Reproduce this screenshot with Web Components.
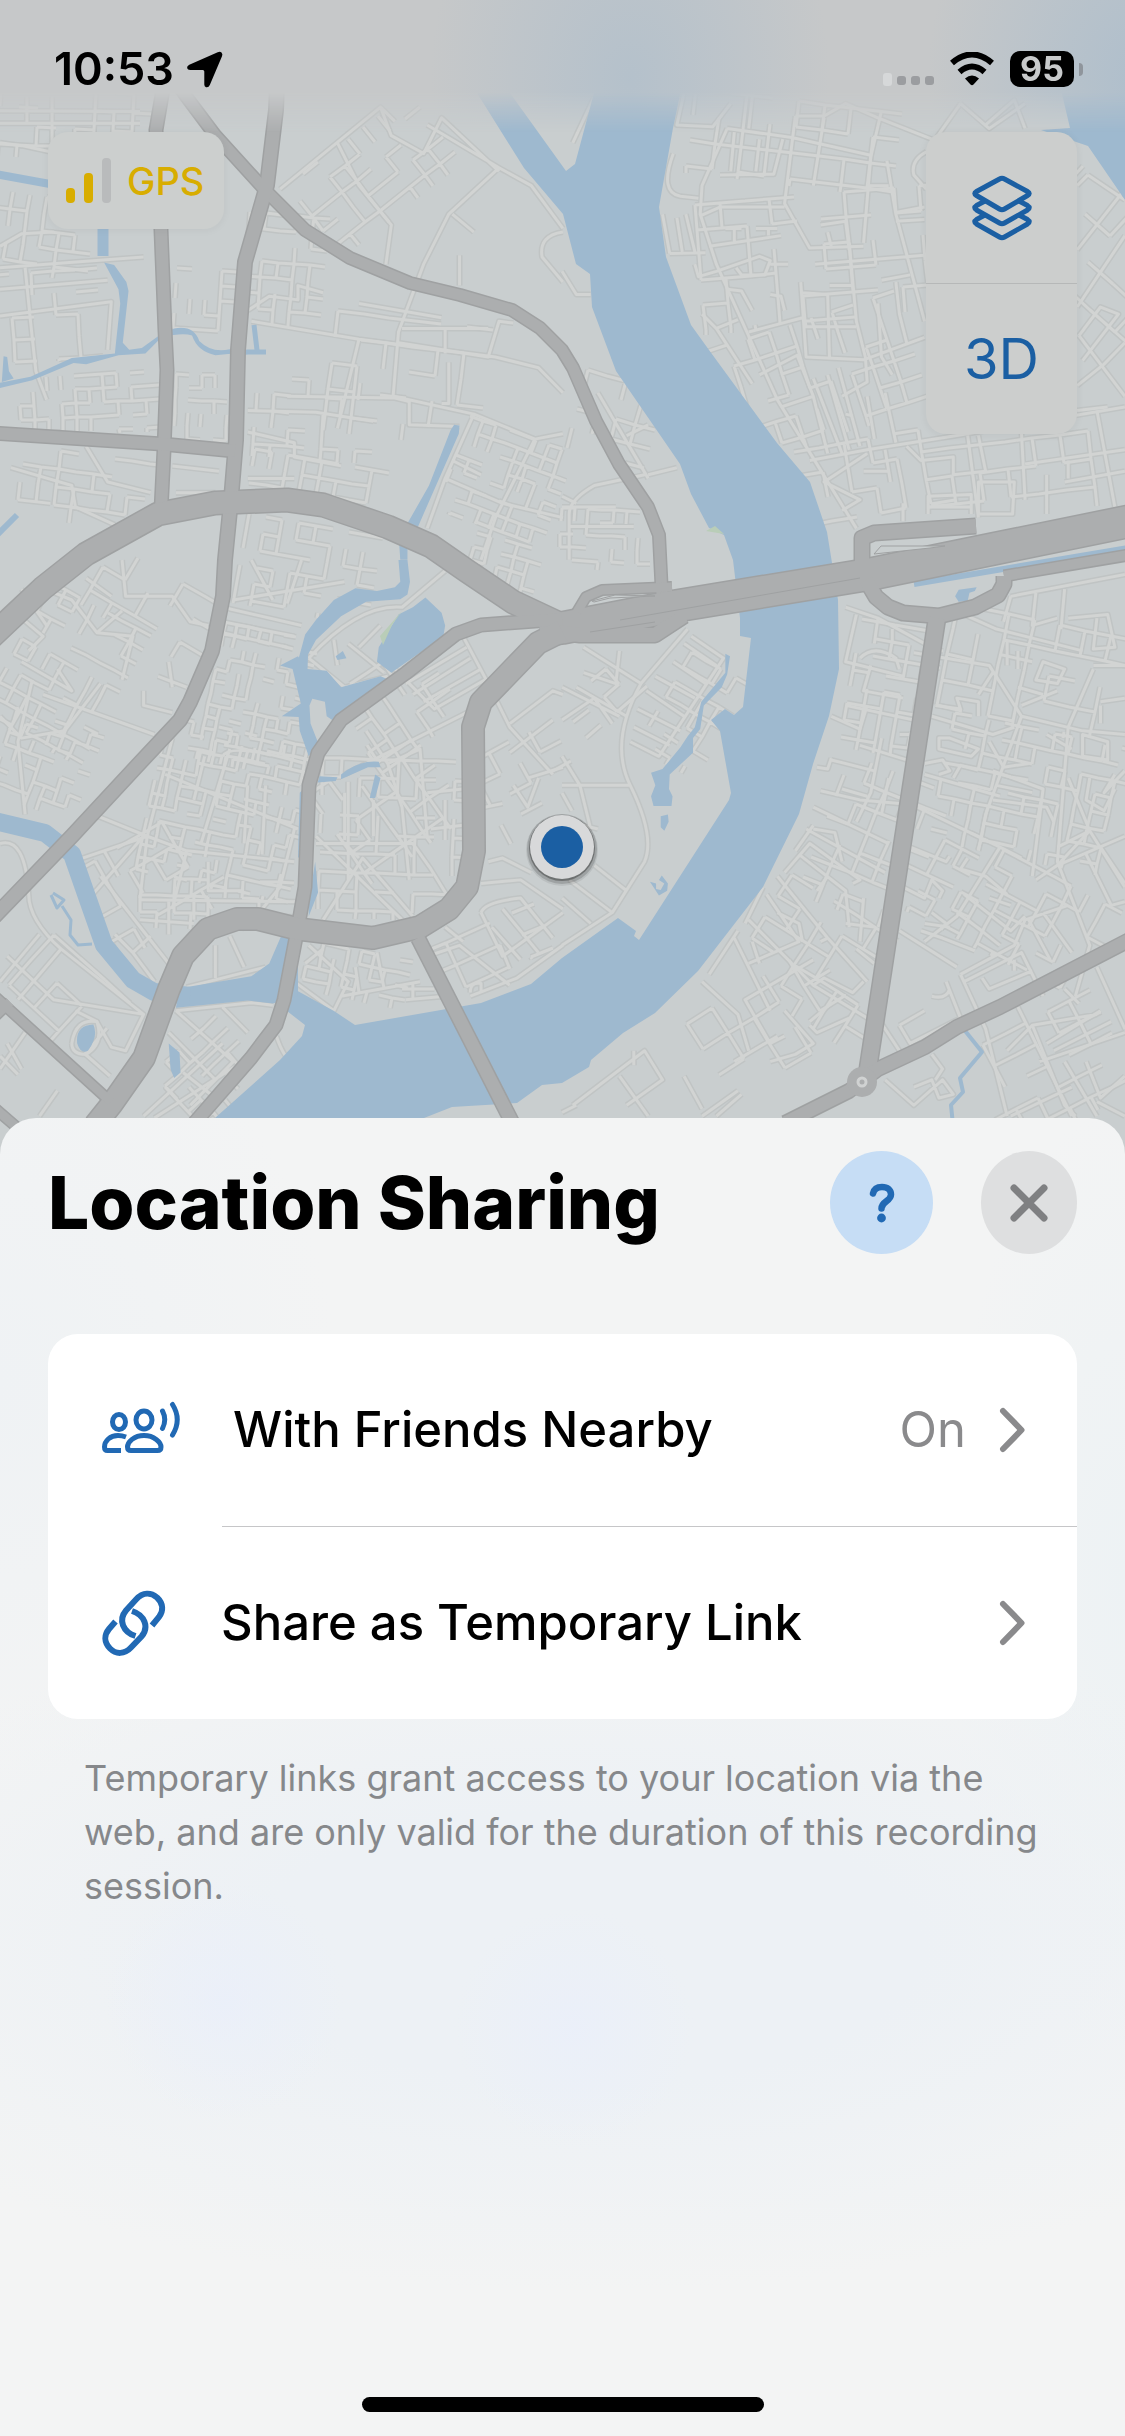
<!DOCTYPE html>
<html lang="en">
<head>
<meta charset="utf-8">
<meta name="viewport" content="width=device-width, initial-scale=1">
<title>Location Sharing</title>
<style>
	body {
		margin: 0;
		font-family: Inter, "Liberation Sans", sans-serif;
		color: #000000;
		background: #c9cecf;
	}
</style>
</head>
<body>
<share-screen>
	<city-map slot="map"></city-map>
	<status-bar slot="status" time="10:53" battery="95"></status-bar>
	<gps-badge slot="tools">GPS</gps-badge>
	<map-controls slot="tools"></map-controls>
	<share-sheet slot="sheet">
		<span slot="title">Location Sharing</span>
		<share-row icon="friends" value="On">With Friends Nearby</share-row>
		<share-row icon="link">Share as Temporary Link</share-row>
		<span slot="note">Temporary links grant access to your location via the web, and are only valid for the duration of this recording session.</span>
	</share-sheet>
</share-screen>

<script>
class ShareScreen extends HTMLElement {
	constructor() {
		super();
		let shadowRoot = this.attachShadow({mode: 'open'});
		shadowRoot.innerHTML = `
		<style>
		:host {
			display: grid;
			grid-template-rows: 559fr 659fr;
			grid-template-columns: minmax(0, 1fr);
			min-height: 100vh;
			overflow: hidden;
		}
		.map {
			grid-area: 1 / 1 / 3 / 2;
			min-height: 0;
		}
		.top {
			grid-area: 1 / 1 / 2 / 2;
			position: relative;
		}
		.tools {
			display: flex;
			justify-content: space-between;
			align-items: flex-start;
			padding: 0 48px;
		}
		.sheet {
			grid-area: 2 / 1 / 3 / 2;
			position: relative;
			display: grid;
		}
		</style>
		<div class="map"><slot name="map"></slot></div>
		<div class="top">
			<slot name="status"></slot>
			<div class="tools"><slot name="tools"></slot></div>
		</div>
		<div class="sheet"><slot name="sheet"></slot></div>`;
	}
}
window.customElements.define('share-screen', ShareScreen);

class StatusBar extends HTMLElement {
	constructor() {
		super();
		let shadowRoot = this.attachShadow({mode: 'open'});
		shadowRoot.innerHTML = `
		<style>
		:host {
			box-sizing: border-box;
			display: flex;
			justify-content: space-between;
			align-items: flex-start;
			height: 132px;
			padding: 42px 42px 0 54px;
			background:
				radial-gradient(ellipse 200px 260px at 56% 60%, rgba(166, 187, 205, .55), transparent),
				radial-gradient(ellipse 220px 260px at 102% 60%, rgba(166, 187, 205, .75), transparent),
				#c6c8c9;
			-webkit-mask-image: linear-gradient(#000 70%, transparent);
			mask-image: linear-gradient(#000 70%, transparent);
		}
		.left, .right {
			display: flex;
			align-items: center;
			height: 54px;
		}
		.left {
			gap: 12px;
			font-size: 45px;
			line-height: 54px;
			font-weight: 600;
		}
		svg {
			display: block;
		}
		.dots {
			margin-right: 14px;
		}
		.wifi {
			margin-right: 15px;
		}
		.battery {
			box-sizing: border-box;
			width: 64px;
			height: 36px;
			border-radius: 10px;
			background: #000000;
			color: #c8cacb;
			font-size: 34px;
			line-height: 36px;
			font-weight: 700;
			text-align: center;
		}
		.nub {
			width: 4px;
			height: 13px;
			margin-left: 5px;
			border-radius: 0 5px 5px 0;
			background: #8f959c;
		}
		</style>
		<div class="left">
			<span class="time"></span>
			<svg width="37" height="37" viewBox="0 0 37 37"><path d="M35.500 1.500Q37 3 36 5.200L23.800 34Q22.500 37 20 36.200Q18.300 35.700 18.300 33.400V20.500Q18.300 19 16.800 19H4.200Q1.500 19 1.100 17Q.8 15 3.300 13.700L31.700 1.300Q34 .3 35.500 1.500Z"/></svg>
		</div>
		<div class="right">
			<svg class="dots" width="52" height="36" viewBox="0 0 52 36">
				<rect y="22" width="9" height="13" rx="3" fill="#d6d8d9"/>
				<g fill="#9b9da0"><rect x="14" y="25" width="9" height="9" rx="3"/><rect x="28" y="25" width="9" height="9" rx="3"/><rect x="42" y="25" width="9" height="9" rx="3"/></g>
			</svg>
			<svg class="wifi" width="46" height="34" viewBox="0 0 46 34">
				<path d="M3 11Q23-6 43 11" fill="none" stroke="#000" stroke-width="6"/>
				<path d="M10.500 20Q23 9 35.500 20" fill="none" stroke="#000" stroke-width="6"/>
				<path d="M16 26.500Q23 20.500 30 26.500L24.500 32.500Q23 34 21.500 32.500Z"/>
			</svg>
			<span class="battery"></span>
			<span class="nub"></span>
		</div>`;
	}

	connectedCallback() {
		this.shadowRoot.querySelector('.time').textContent = this.getAttribute('time');
		this.shadowRoot.querySelector('.battery').textContent = this.getAttribute('battery');
	}
}
window.customElements.define('status-bar', StatusBar);

class GpsBadge extends HTMLElement {
	constructor() {
		super();
		let shadowRoot = this.attachShadow({mode: 'open'});
		shadowRoot.innerHTML = `
		<style>
		:host {
			box-sizing: border-box;
			display: flex;
			align-items: center;
			gap: 16px;
			height: 97px;
			padding: 0 20px 0 18px;
			border-radius: 20px;
			background: #cccfce;
			box-shadow: 0 1px 8px rgba(0, 0, 0, .05);
			color: #d8ad00;
			font-size: 38px;
			line-height: 48px;
			font-weight: 500;
		}
		svg {
			display: block;
		}
		</style>
		<svg width="45" height="45" viewBox="0 0 45 45">
			<rect y="30" width="9" height="15" rx="4" fill="#d8ad00"/>
			<rect x="18" y="15" width="9" height="30" rx="4" fill="#d8ad00"/>
			<rect x="36" width="9" height="45" rx="4" fill="#b9bbbc"/>
		</svg>
		<span><slot></slot></span>`;
	}
}
window.customElements.define('gps-badge', GpsBadge);

class MapControls extends HTMLElement {
	constructor() {
		super();
		let shadowRoot = this.attachShadow({mode: 'open'});
		shadowRoot.innerHTML = `
		<style>
		:host {
			display: flex;
			flex-direction: column;
			width: 151px;
			border-radius: 20px;
			background: #cccecd;
			box-shadow: 0 1px 8px rgba(0, 0, 0, .06);
		}
		button {
			display: flex;
			justify-content: center;
			align-items: center;
			height: 151px;
			padding: 0;
			border: 0;
			background: none;
			color: #1b5fa3;
			font: inherit;
			font-size: 56px;
			line-height: 64px;
		}
		button + button {
			border-top: 1px solid #b6b8b8;
		}
		</style>
		<button type="button" aria-label="Map layers">
			<svg width="60" height="66" viewBox="0 0 60 66" fill="none" stroke="#1b5fa3" stroke-width="5" stroke-linejoin="round">
				<path d="M27.500 4Q30 2.500 32.500 4L55.500 16.500Q59 18.500 55.500 20.500L32.500 34Q30 35.500 27.500 34L4.500 20.500Q1 18.500 4.500 16.500Z"/>
				<path d="M13 26L4.500 30.500Q1 32.700 4.500 35L27.500 48Q30 49.500 32.500 48L55.500 35Q59 32.700 55.500 30.500L47 26"/>
				<path d="M13 40L4.500 44.500Q1 46.700 4.500 49L27.500 62Q30 63.500 32.500 62L55.500 49Q59 46.700 55.500 44.500L47 40"/>
			</svg>
		</button>
		<button type="button">3D</button>`;
	}
}
window.customElements.define('map-controls', MapControls);

class ShareSheet extends HTMLElement {
	constructor() {
		super();
		let shadowRoot = this.attachShadow({mode: 'open'});
		shadowRoot.innerHTML = `
		<style>
		:host {
			display: flex;
			flex-direction: column;
			padding: 33px 48px 24px;
			border-radius: 36px 36px 0 0;
			background:
				radial-gradient(circle at 20% 67%, rgba(234, 239, 250, .8), transparent 120px),
				radial-gradient(circle at 51% 69%, rgba(234, 239, 250, .8), transparent 120px),
				radial-gradient(ellipse 75% 26% at 52% 63%, #edf1f5 40%, transparent),
				radial-gradient(ellipse 30% 30% at 0% 20%, #eff2f4, transparent),
				radial-gradient(ellipse 16% 36% at 100% 35%, #edf2f4, transparent),
				#f3f4f4;
		}
		header {
			display: flex;
			align-items: center;
			gap: 48px;
		}
		h1 {
			flex: 1;
			margin: 0;
			font-size: 73px;
			line-height: 88px;
			font-weight: 800;
		}
		button {
			display: flex;
			justify-content: center;
			align-items: center;
			width: 96px;
			height: 103px;
			padding: 0;
			border: 0;
			border-radius: 50%;
			background: #dedfe0;
		}
		.help {
			width: 103px;
			background: #c6ddf5;
		}
		.card {
			margin-top: 80px;
			border-radius: 30px;
			background: #ffffff;
			overflow: hidden;
		}
		p {
			flex: 1;
			margin: 32px 36px 0;
			color: #86888b;
			font-size: 36px;
			line-height: 54px;
		}
		.home {
			align-self: center;
			width: 402px;
			height: 15px;
			border-radius: 8px;
			background: #000000;
		}
		</style>
		<header>
			<h1><slot name="title"></slot></h1>
			<button class="help" type="button" aria-label="Help">
				<svg width="26" height="40" viewBox="0 0 26 40"><path d="M4 10.500C5 6 8.500 4 13 4C18.500 4 22 7 22 11.500C22 18.500 12.500 18 12.500 25.500" fill="none" stroke="#2169b4" stroke-width="6.500" stroke-linecap="round"/><circle cx="12.500" cy="35" r="4.400" fill="#2169b4"/></svg>
			</button>
			<button type="button" aria-label="Close">
				<svg width="38" height="38" viewBox="0 0 38 38"><path d="M4 4L34 34M34 4L4 34" stroke="#7f8082" stroke-width="7" stroke-linecap="round"/></svg>
			</button>
		</header>
		<div class="card"><slot></slot></div>
		<p><slot name="note"></slot></p>
		<div class="home"></div>`;
	}
}
window.customElements.define('share-sheet', ShareSheet);

const rowIcons = {
	friends: `
		<svg width="80" height="60" viewBox="0 0 80 60" fill="none" stroke="#2169b4" stroke-width="5" stroke-linecap="round">
			<ellipse cx="18" cy="22" rx="6.500" ry="7.500"/>
			<ellipse cx="43" cy="20" rx="8" ry="9"/>
			<path d="M25 37Q21 35.500 17 35.500C9 35.500 3.500 41 3.500 47Q3.500 50.500 6.500 50.500H20" stroke-linecap="butt"/>
			<path d="M43 35.500C33 35.500 26.500 42 26.500 47Q26.500 50.500 30 50.500H56.500Q60 50.500 60 47C60 42 53 35.500 43 35.500Z"/>
			<path d="M61.500 11Q66 19.500 61.500 28.500M71.500 4.500Q81 19.500 71.500 35"/>
		</svg>`,
	link: `
		<svg width="66" height="66" viewBox="0 0 66 66" fill="none" stroke="#2169b4" stroke-width="6">
			<path d="M34.500 46C22 42 17 30 25 20.500L35 9.500C42 2 50 2.500 56 7.500C62.500 13.500 62.500 21 58 27L51 35.500"/>
			<path d="M31 21C43.500 25 48.500 37 40.500 46.500L30 57.500C23.500 64.500 15 64.500 9 58.500C3 52.500 3 45 8 39L14.500 31.500"/>
		</svg>`
};

class ShareRow extends HTMLElement {
	constructor() {
		super();
		let shadowRoot = this.attachShadow({mode: 'open'});
		shadowRoot.innerHTML = `
		<style>
		:host {
			display: block;
			--inset: 174px;
		}
		button {
			box-sizing: border-box;
			display: flex;
			align-items: center;
			width: 100%;
			height: 192px;
			padding: 0 51px 0 53px;
			border: 0;
			background: none;
			color: #000000;
			font: inherit;
			font-size: 49px;
			line-height: 60px;
			font-weight: 500;
			text-align: left;
		}
		.icon {
			flex: none;
			min-width: 120px;
		}
		.icon svg, .chevron {
			display: block;
		}
		:host([icon="friends"]) .icon {
			min-width: 132px;
		}
		.label {
			flex: 1;
		}
		.value {
			margin-right: 32px;
			color: #8a8a8c;
			font-weight: 400;
		}
		:host(:not(:first-of-type)) .line {
			height: 1px;
			margin-left: var(--inset);
			background: #c6c6c8;
		}
		</style>
		<div class="line"></div>
		<button type="button">
			<span class="icon"></span>
			<span class="label"><slot></slot></span>
			<span class="value"></span>
			<svg class="chevron" width="28" height="48" viewBox="0 0 28 48"><path d="M5 5L23.500 24L5 43" fill="none" stroke="#8a8a8c" stroke-width="6" stroke-linecap="round" stroke-linejoin="round"/></svg>
		</button>`;
	}

	connectedCallback() {
		this.shadowRoot.querySelector('.icon').innerHTML = rowIcons[this.getAttribute('icon')];
		this.shadowRoot.querySelector('.value').textContent = this.getAttribute('value') || '';
	}
}
window.customElements.define('share-row', ShareRow);

// dense blocks of side streets: x, y, width, height, angle, spacing
const blocks = [
	[-20, 90, 170, 70, 3, 19], [-10, 196, 95, 80, 8, 17], [-10, 272, 110, 90, -4, 22], [20, 375, 130, 60, -3, 14],
	[175, 270, 60, 60, 4, 15], [175, 375, 55, 65, 2, 13], [245, 215, 75, 110, 5, 16], [300, 130, 150, 90, -38, 19],
	[255, 380, 110, 80, 4, 17], [330, 320, 150, 120, 7, 26], [450, 430, 100, 100, 20, 14], [250, 460, 130, 45, 10, 17],
	[20, 455, 130, 70, 8, 18], [240, 525, 130, 90, 10, 17], [90, 570, 120, 70, 30, 26], [10, 600, 110, 150, 28, 16],
	[210, 630, 90, 140, 12, 12], [150, 730, 145, 160, 12, 13], [0, 720, 90, 90, 20, 13], [90, 840, 110, 100, -30, 26],
	[320, 760, 145, 160, 2, 19], [330, 750, 120, 110, -35, 24], [350, 660, 100, 90, -34, 20], [485, 740, 80, 90, -28, 23],
	[140, 880, 140, 50, 2, 17], [305, 950, 95, 50, 12, 13], [430, 930, 100, 50, -24, 24], [10, 960, 110, 90, 42, 34],
	[170, 1040, 70, 75, -43, 17], [580, 340, 80, 130, 15, 20], [560, 510, 90, 60, 3, 13], [470, 540, 60, 50, 15, 14],
	[690, 100, 190, 85, 7, 26], [700, 195, 230, 130, -5, 25], [720, 320, 190, 120, -18, 22], [800, 440, 130, 75, -10, 25],
	[925, 440, 190, 75, -7, 28], [1085, 170, 90, 230, -48, 34], [850, 625, 75, 130, 10, 17], [820, 770, 110, 150, 22, 22],
	[945, 620, 170, 110, 12, 26], [940, 730, 180, 130, 12, 17], [920, 860, 180, 100, 28, 19], [750, 900, 130, 120, 32, 25],
	[980, 1020, 130, 110, -27, 24], [700, 980, 140, 90, -32, 30], [565, 680, 70, 40, -40, 20], [660, 660, 60, 110, 30, 17]
];

class CityMap extends HTMLElement {
	constructor() {
		super();
		let shadowRoot = this.attachShadow({mode: 'open'});
		shadowRoot.innerHTML = `
		<style>
		:host {
			display: block;
			height: 100%;
		}
		svg {
			display: block;
			width: 100%;
			height: 100%;
		}
		path {
			vector-effect: non-scaling-stroke;
		}
		.water {
			fill: #9eb9cf;
		}
		.canal {
			fill: none;
			stroke: #9eb9cf;
			stroke-linejoin: round;
		}
		.edge {
			stroke: #c0c4c4;
			stroke-width: 6px;
		}
		.street {
			stroke: #d2d4d3;
			stroke-width: 3px;
		}
		.road {
			fill: none;
			stroke: #acaeaf;
			stroke-linejoin: round;
		}
		.casing {
			fill: none;
			stroke: #9fa1a2;
			stroke-linejoin: round;
		}
		</style>
		<svg viewBox="0 0 1125 2436" preserveAspectRatio="xMidYMin slice" role="img" aria-label="Map">
			<defs>
				<g id="streets" fill="none" stroke-linejoin="round">
					<path id="blocks"/>
					<g transform="scale(.359 .357)">
						<path d="M0 750L240 732L400 720M0 810L300 785M70 750L85 900L100 1040L130 1120M0 885L310 845L300 980M0 400L60 408L140 425M0 345L390 345M0 310L390 312M75 270V345M145 270V400M0 690L60 655L150 650"/>
						<path d="M780 530L1060 300L1100 340M940 400L1000 520L1090 630L1075 740M1190 350L1390 470L1250 600L1180 740L1110 930L1095 1110M1060 300L1090 380L1180 430L1230 330L1390 480M1390 470L1480 520L1568 640M1568 650Q1500 660 1510 720L1568 790M1260 600L1320 650M1280 715V800"/>
						<path d="M700 900L1000 950L1380 1000L1500 1030L1568 1100M690 870L750 830L830 840V800L900 820M1000 850L1230 890M1110 960L1360 1000L1390 900L1430 905M1120 920H1360M1000 950L940 1200M1240 920V990M690 1150L880 1155L1040 1180M800 1110L1100 1115L1140 1125V1190L1280 1195M1095 1110L1320 1160L1240 1340L1190 1480M1320 1160L1490 1230L1568 1215M1490 1230L1380 1450L1340 1568M1240 1340L1400 1410L1568 1450M1260 1290L1340 1330"/>
						<path d="M1250 1015V1130H1230M690 1210L820 1240V1280L950 1305M690 1340H820M480 1305L610 1320M490 1380H600M30 1310L200 1360L210 1420L320 1470M50 1400L140 1410M240 1250L300 1350L420 1380"/>
					</g>
					<g transform="translate(562 0) scale(.359 .357)">
						<path d="M90 270L30 400M340 260L320 350L420 355L470 290M460 360L640 385L860 435M460 360L390 520L385 600L430 740L600 1120L820 1480M650 325L620 570L690 695L840 690M650 325H730L790 290L880 330L1030 390M310 430Q270 540 330 550L380 555M440 490L590 488L615 390M385 605L440 580H620M890 310L860 440L840 680M730 330L700 520M1110 290L1190 360L1290 290M1110 290L1040 390M1180 350L1260 280L1290 360M520 360L530 270M480 370L470 480M550 390L540 480"/>
						<path d="M1015 425Q970 450 980 490L1015 530M905 450L930 600L1010 900M850 520H910M930 595L1010 580M930 620L1010 615M410 690L610 660M480 640V680M455 640H500M575 640V660M540 640H600M485 750L500 770H565L580 730L550 718L430 760L380 775L370 740M580 740H630M300 710L400 708M300 710L280 600M345 600L370 705M320 610L335 705M705 740L1010 715M800 680L820 900L845 1000L850 1070L780 1110M720 630L790 620L800 700M740 650L750 690"/>
						<path d="M665 790L680 1000L840 1008L1010 945M670 820L740 825L745 1000M670 915H820M745 800H810M430 920L490 895M390 880L430 920L530 1075M520 930L670 890M460 810L500 815L530 870M580 825L610 830L620 870M890 785L970 770M880 850L890 1000L920 1050M930 790L940 880L960 960M550 1050L655 995L700 1110L740 1270M610 1140L700 1110M740 1050L800 1260M770 1030L830 1250M850 1110L870 1230M900 1100L930 1240M700 1060L780 1270M690 1290L850 1260L1100 1220L1568 1140M790 1160L810 1165"/>
						<path d="M850 1270L730 1350L830 1400L780 1430M960 1250L1000 1290L1090 1280V1330L1180 1320L1160 1220M1280 1215L1290 1400M1290 1300L1568 1260M1490 1150L1540 1420M1160 1350H1260L1255 1440H1160ZM1020 1440V1390L1140 1385V1440M1020 1420H1140M840 1320H910M950 1410V1460M900 1260L915 1350M1130 1220L1160 1450M1400 1350L1568 1320M1410 1290V1340M1350 1330V1440"/>
						<path d="M1435 700L1568 530M1435 860L1568 660M1465 490L1568 560M1435 520L1465 490M1440 940L1500 860L1550 880L1450 1010M1440 940L1568 1110M1435 1080L1510 1020L1568 960M1435 1150L1520 1140M180 1220L240 1190M240 1330L320 1310M100 1100L240 1340M0 1390L40 1410M20 1568V1440Q20 1400 90 1360L230 1330M0 1420H150M20 1475H200M0 760L40 825H80"/>
					</g>
					<g transform="translate(0 560) scale(.359 .3635)">
						<path d="M150 90L200 110L270 200L370 210L340 330M270 200L340 140M160 300L200 360L60 280M0 180L60 160L120 210L80 250M60 80L130 180M340 0L350 100L480 100L530 170L580 180M240 50L310 100M620 130L840 180M620 170L820 210M620 200L800 240M700 0L760 110M840 0L800 120M650 110L960 60M0 430L60 490L180 470L280 340M90 330L50 500L70 700M120 370L430 480M400 360V400L480 420M440 320L520 350M470 280L480 350"/>
						<path d="M480 490L410 760L390 930M460 590L830 740M620 540Q640 500 850 560M640 520L560 780M410 760L520 800L820 830M520 800L480 960M580 830V910H680M390 935L830 940M470 940V1030M540 920V990M390 990L540 1000M820 740L780 900L730 960M570 540L540 660M690 620L680 780M740 620L730 810M230 820L410 760L260 700M240 940L400 760M280 870L470 1110M320 1030L370 1080L430 1160M370 1080L420 1035M290 800L330 870"/>
						<path d="M860 270L960 350L1080 320M860 270Q1000 120 1120 130L1240 30M930 220L940 290M970 230L1070 310M1000 240L1060 180M1080 280L1210 410L1350 330M1130 340L1300 240M1150 370L1310 270M1180 390L1340 300M1290 210L1360 340L1420 460L1540 590M960 590L1380 380M1020 470L1080 560L1170 520L1190 760M960 640L960 770M970 610V880M1080 560L1120 680L1140 880M880 780H1150L1200 850L1250 930M880 760L1120 990M900 990L1010 820L1150 980M1000 820L960 780M1040 660V760M1190 640L1290 630M1200 740L1290 730M1240 660V770"/>
						<path d="M1420 450L1540 360L1568 370M1420 530L1540 440M1470 600L1568 570M1430 620L1470 680L1500 600M1350 680L1400 670M1360 830L1400 820L1480 860M1340 890L1450 880L1568 960M1340 970Q1350 940 1450 930L1540 1040M1340 970L1400 1090L1568 970M1370 1010L1450 1100M1400 960L1500 1080M1190 1090L1280 1060L1420 1170M1240 1010L1290 1050M1310 1200L1440 1150L1568 1060M1310 1190Q1310 1160 1340 1165V1190M860 1060L970 1160L930 1240L820 1160M850 1110L900 1070M950 1200L1170 1160M990 1120L1000 1190M1050 1080L1070 1180M1120 1180H1210M1130 1210L1240 1200M1150 1160V1210"/>
						<path d="M0 780Q70 760 80 920Q80 990 170 1070L400 1250L350 1350L310 1340L270 1270L210 1240M20 1090L150 1210L400 1250M50 1210L170 1070M0 1160L110 1030M490 1240L700 1218L760 1225M490 1240L650 1380L530 1500M620 1230L690 1300M400 1530L620 1330M430 1535L660 1390M470 1300L600 1430M460 1450L540 1535M510 1410L600 1480M770 1310Q790 1370 820 1390M800 1405L885 1330M520 1175L740 1120M600 1060V1150M640 1035L680 1120"/>
						<path d="M200 1330Q210 1260 270 1270Q290 1330 240 1360Q200 1360 200 1330M0 1400L70 1300M20 1330L60 1400M0 1365L50 1415M110 1530L160 1460"/>
					</g>
					<g transform="translate(562 560) scale(.359 .3635)">
						<path d="M350 190L220 340Q130 500 190 620Q260 760 230 830L140 970L0 1060M360 210L450 270L270 540L190 500M340 230L430 290M310 280L400 340M260 320L370 380M235 360L340 430M210 410L330 470M200 460L300 510M0 620H190M0 540L50 620L80 740M100 740L60 730M90 840L180 910M20 880L140 970M0 930L80 1000M0 350L160 430M0 440L90 380L140 450M40 350L180 430M60 240L220 340M160 250L150 340L60 310"/>
						<path d="M790 130L880 160L1010 230M820 150L790 280L950 320M830 270Q870 230 930 270L940 300M880 160L870 230M920 190V230M860 290L840 360L950 380M790 400L980 440M750 430L830 465L850 400M940 480L970 480M830 510L960 550M890 490L860 640L820 720M750 550L870 580M710 570L740 575L750 545M720 635L830 660L940 670M780 630L850 650M700 680L910 780M910 600L890 700M680 740L900 860M700 730L650 800M620 860L690 780L830 880L810 890M660 810L790 910L800 1010M600 870L740 1040L850 1160M700 740L760 750L780 830M710 910L740 870M790 1000L870 1010M840 930L830 1050"/>
						<path d="M560 900L510 1000M570 920L660 1050L520 1110M520 990L700 1170L900 1290M480 1040L580 1240M490 1020L410 1140M390 1160L490 1250L520 1350M600 970L660 1000L670 1050M700 1100L510 1210L580 1330L620 1310M700 1170L730 1150L810 1190L840 1160M480 1380L600 1310M620 1240L700 1330L650 1360L580 1380M690 1270L750 1220M690 1280L710 1300L800 1260M720 1050L740 1040M820 1070L870 1110M530 1050L550 1110M30 1500L230 1350L280 1430L180 1500M160 1420L240 1530M200 1350V1390M340 1420L390 1510M390 1530L490 1460M430 1530L500 1470M0 1520L40 1500"/>
						<path d="M980 255L1190 290L1280 430L1450 470L1568 480M1280 430L1180 700L1160 800M1120 150L1210 190L1450 250M1250 100L1568 40M1250 100L1230 170M1320 90L1310 180L1380 160M1400 80L1390 190M1410 160L1520 150L1540 240L1480 245L1490 160M1480 290H1568M1480 300L1410 460L1380 830L1470 1060L1430 1200M1310 1280L1400 1500L1430 1530M1200 310L1160 370M1270 350L1340 370M1280 400L1380 360M1340 280L1400 300L1380 340L1320 330ZM1240 220V290M1270 250V300M1220 260L1310 280M1040 400L1110 410L1100 380L1160 390V430M1030 430L1200 480L1260 460M1050 490H1080L1160 520L1140 540L1050 520ZM1010 590L1220 650"/>
						<path d="M1010 560L1060 550L1080 580L1050 590M1090 600L1110 565L1230 590M1200 580L1340 630L1310 870M1210 620L1310 640M1200 660L1350 680L1370 720M1190 500L1230 570L1300 560M990 680L1220 790L1280 820M970 790L1070 830L1080 815M1220 790L1100 980L1010 1050M1130 820L1110 850L1180 870L1240 920M1320 880L1380 840L1470 745L1410 600M1380 790L1470 745L1568 900M1380 840L1568 760M1460 810L1530 950L1568 940M1500 790L1568 890M960 840L1090 900M950 900L1010 930L1030 880L1060 910L1050 930M1350 480L1420 520M1450 480L1520 500V550L1450 540ZM1500 390L1568 380M1500 400V450M1540 590L1510 640L1568 580M1470 600L1460 660L1510 690L1540 630"/>
						<path d="M1000 1020L1060 1040L1150 1075M1010 1000L1080 1010M1030 970L1070 1000M1130 990L1220 1060M940 1020L1100 1120M1100 970L1170 1020M1120 920L1250 1020L1290 980M1190 930L1250 950M1110 1140L1260 1060L1290 990L1410 950M1120 1160L1280 1080L1340 1200M1110 1140L1180 1290L1240 1530M1170 1150L1190 1180L1310 1130M1260 1100V1130M1300 990L1360 1100M1340 970L1420 1080M940 1280L1010 1240M940 1280L970 1330L1110 1260L1070 1160M1030 1200Q1070 1210 1080 1180M1270 1230L1420 1530M1240 1350L1310 1280L1490 1250M1350 1330L1500 1240M1370 1350L1530 1270M1330 1380L1568 1300M1400 1380L1490 1530M1490 1120L1568 1290M1400 1180L1440 1220M1460 1380L1500 1480L1568 1420M1490 1490L1568 1530M1250 1530L1420 1450M980 1450L1030 1430L1050 1480L1090 1470L1060 1430L980 1500L900 1430M880 1260L940 1350M1030 1360L1060 1400L1040 1430"/>
					</g>
				</g>
				<g id="roads">
					<path style="stroke-width:15px" d="M165 60L162 95L156 130L161 230L165 330L167 370L164 450L161 510"/>
					<path style="stroke-width:14px" d="M160 60L185 95L215 135L265 190L305 230L350 258L410 283L460 295L512 310L540 328L562 350L573 368L596 421L619 464L648 507L659 535L662 595"/>
					<path style="stroke-width:16px" d="M278 60L276 110L267 185L245 262L238 350L236 440L231 500L225 560L223 596L212 651L190 702L180 720L136 767L72 836L-9 920"/>
					<path style="stroke-width:15px" d="M-9 433L162 444L235 451"/>
					<path style="stroke-width:25px" d="M-9 637L43 588L86 554L158 514L215 503L287 500L323 505L388 527L431 546L467 571L513 602L562 625"/>
					<path style="stroke-width:34px" d="M540 631L562 628L670 607L871 574L993 549L1140 519"/>
					<path style="stroke-width:13px" d="M1004 576L1140 553"/>
					<path style="stroke-width:17px" d="M866 580L876 597L888 607L903 613L939 616L975 607L998 595L1004 584V576"/>
					<path style="stroke-width:17px" d="M862 572V538L874 533L976 526"/>
					<path style="stroke-width:12px" d="M577 612L586 597L602 590L672 587"/>
					<path style="stroke-width:17px" d="M540 630L580 635L655 635L684 616"/>
					<path style="stroke-width:19px" d="M937 618L867 1075"/>
					<path style="stroke-width:16px" d="M1135 937L1000 1007L957 1027L925 1047L878 1069L849 1091L785 1123"/>
					<path style="stroke-width:15px" d="M562 619L481 625L456 634L406 673L341 720L318 753L309 785L305 887L298 927L284 1000L276 1025L251 1058L190 1128"/>
					<path style="stroke-width:24px" d="M562 631L538 643L481 702L473 727L474 851L467 887L449 909L420 927L373 938L298 929L258 919L237 919L208 929L183 956L169 989L144 1058L111 1105L95 1125"/>
					<path style="stroke-width:16px" d="M418 938L515 1128"/>
					<path style="stroke-width:12px" d="M-9 993L111 1102M-9 1020L10 1002M-9 1105L20 1130"/>
				</g>
			</defs>
			<rect width="1125" height="2436" fill="#c9cecf"/>
			<use class="edge" href="#streets"/>
			<use class="street" href="#streets"/>

			<g class="water">
				<path d="M420 0L477 93L524 168L563 214L576 264L590 274L592 307L616 371L680 464L691 494L709 528L724 535L733 560L740 618V636L751 638L743 707L734 715L725 709L711 720L720 731L731 793L729 800L639 940L634 936L636 931L618 918L562 958L531 984L481 1003L355 1025L334 1011L294 989L287 1011L305 1025L302 1036L280 1060L215 1118V1140H400L424 1118L452 1107L517 1103L542 1085L562 1083L589 1067L591 1060L623 1033L655 1013L698 971L763 887L799 814L813 764L829 716L839 669L838 600L827 532L810 482L777 443L709 350L691 325L666 257L659 207L673 128L700 0H615L594 93L575 164L566 171L510 93L450 0Z"/>
				<path d="M1040 0L1070 128L1041 130L1088 146L1125 200V0Z"/>
				<g transform="scale(.359 .357)">
					<path d="M290 735L318 742L352 790L358 815L342 960L360 980L395 975L450 935L485 920Q540 910 555 955Q590 990 640 978L650 990L600 995Q550 985 535 940Q510 930 450 945L405 990L330 995L240 1020L205 1017L90 1065L0 1087V1072L85 1055L200 1003L320 990Q325 940 335 850L330 810ZM10 998L20 1000L25 1040L38 1060L5 1070ZM1265 1190L1280 1192L1278 1215L1160 1485L1130 1475L1195 1360L1255 1205ZM1112 1525L1135 1530V1568H1115Z"/>
				</g>
				<g transform="translate(0 560) scale(.359 .3635)">
					<path d="M1110 0H1135L1142 60L1135 95L1115 108L1020 115L950 155L880 220L858 260L856 320L820 310L835 260L850 205L880 165L930 110L990 78L1050 85L1100 75L1115 60Z"/>
					<path d="M1185 103L1230 145L1240 180L1235 210L1090 310L1050 280L1055 240L1110 150L1150 130Z"/>
					<path d="M780 290L830 265L855 300L910 305L950 350L1060 320L1085 330L940 450L910 430L905 390L870 382L862 400L865 450L885 500L860 540L835 470L832 432L785 430L838 395L815 300Z"/>
					<path d="M500 1178L700 1145L750 1110L785 1030H830V1200L760 1220L690 1212L490 1232Z"/>
					<path d="M950 590Q1000 550 1055 555L1060 570L1025 570L950 603ZM1045 590L1060 600L1045 655L1030 655ZM890 595L940 598L935 608L885 612ZM215 1330Q210 1280 260 1278Q275 1310 245 1350Q225 1360 215 1330ZM470 1330L500 1355L503 1410L485 1425L475 1400ZM935 265L955 250L965 270L940 275ZM878 830L886 915L860 980V940ZM835 640L845 630L840 810L830 820Z"/>
				</g>
				<g transform="translate(562 560) scale(.359 .3635)">
					<path d="M455 258L468 265L460 315L445 350L395 400L385 465L365 490V530L300 590L298 630L308 650L305 677H255L248 650L260 620L248 585L280 575L330 515L350 485L370 460L388 390L455 310ZM275 705L295 700L297 720L285 745L275 735ZM245 885L262 890L262 905L275 908L285 890L270 880L278 868L295 890L293 910L270 923ZM1095 100L1105 82L1155 75L1150 85L1135 90L1130 112L1105 115Z"/>
				</g>
			</g>
			<g class="canal">
				<path style="stroke-width:8px" d="M-5 174L50 184"/>
				<path style="stroke-width:11px" d="M103 225V256"/>
				<path style="stroke-width:5px" d="M235 353L248 352L266 352M254 325L257 350"/>
				<path style="stroke-width:6px" d="M-5 537L17 515"/>
				<path style="stroke-width:18px" d="M-9 820L45 833L72 854L86 894L104 945L133 980L154 992L190 996"/>
				<path style="stroke-width:3px" d="M53 893L64 900L57 908L51 895M62 906L71 920L70 935L78 945L92 944"/>
				<path style="stroke-width:4px" d="M962 1027L982 1052L960 1078L963 1092L951 1105L953 1125"/>
				<path style="stroke-width:6px" d="M914 584L1140 546"/>
			</g>
			<path d="M724 534L715 526L706 531ZM402 611L392 625L383 645L380 636Z" fill="#b9cdb8"/>

			<use class="casing" href="#roads"/>
			<g id="fill"></g>
			<circle cx="862" cy="1082" r="15" fill="#acaeaf"/>
			<circle cx="862" cy="1082" r="4" fill="#acaeaf" stroke="#d0d2d2" stroke-width="3"/>
			<path d="M592 601L615 595L655 596L610 598L594 602ZM874 554L881 546L945 546L930 548Z" fill="#c9cecf" stroke="#9fa1a2"/>
			<path d="M620 620L860 578M590 632L655 622" fill="none" stroke="#9fa1a2"/>

			<circle cx="562" cy="850" r="36" fill="#000" opacity=".07"/>
			<circle cx="562" cy="849" r="35" fill="#000" opacity=".15"/>
			<circle cx="562" cy="848" r="33" fill="#000" opacity=".3"/>
			<circle cx="562" cy="847" r="32" fill="#d8d9da"/>
			<circle cx="562" cy="847" r="21" fill="#1b5fa3"/>
		</svg>`;
		this.drawBlocks();
		this.drawRoadFill();
	}

	drawBlocks() {
		let seed = 7;
		let random = () => (seed = (seed * 16807) % 2147483647) / 2147483647;
		let d = '';
		for (let [x, y, w, h, angle, step] of blocks) {
			let cos = Math.cos(angle * Math.PI / 180);
			let sin = Math.sin(angle * Math.PI / 180);
			let point = (u, v) => {
				let dx = u - w / 2;
				let dy = v - h / 2;
				return Math.round(x + w / 2 + dx * cos - dy * sin) + ' ' + Math.round(y + h / 2 + dx * sin + dy * cos);
			};
			for (let v = 0; v <= h; v += step) {
				for (let u = 0; u < w; u += step) {
					if (random() < .56) {
						d += 'M' + point(u, v) + 'L' + point(u + step, v);
					}
					if (random() < .5) {
						d += 'M' + point(u, v) + 'L' + point(u, Math.min(h, v + step));
					}
				}
			}
		}
		this.shadowRoot.querySelector('#blocks').setAttribute('d', d);
	}

	// same roads again, a little narrower, over their casing
	drawRoadFill() {
		let fill = this.shadowRoot.querySelector('#fill');
		for (let road of this.shadowRoot.querySelectorAll('#roads path')) {
			let top = road.cloneNode();
			top.setAttribute('class', 'road');
			top.style.strokeWidth = (parseInt(road.style.strokeWidth) - 3) + 'px';
			fill.appendChild(top);
		}
	}
}
window.customElements.define('city-map', CityMap);
</script>
</body>
</html>
